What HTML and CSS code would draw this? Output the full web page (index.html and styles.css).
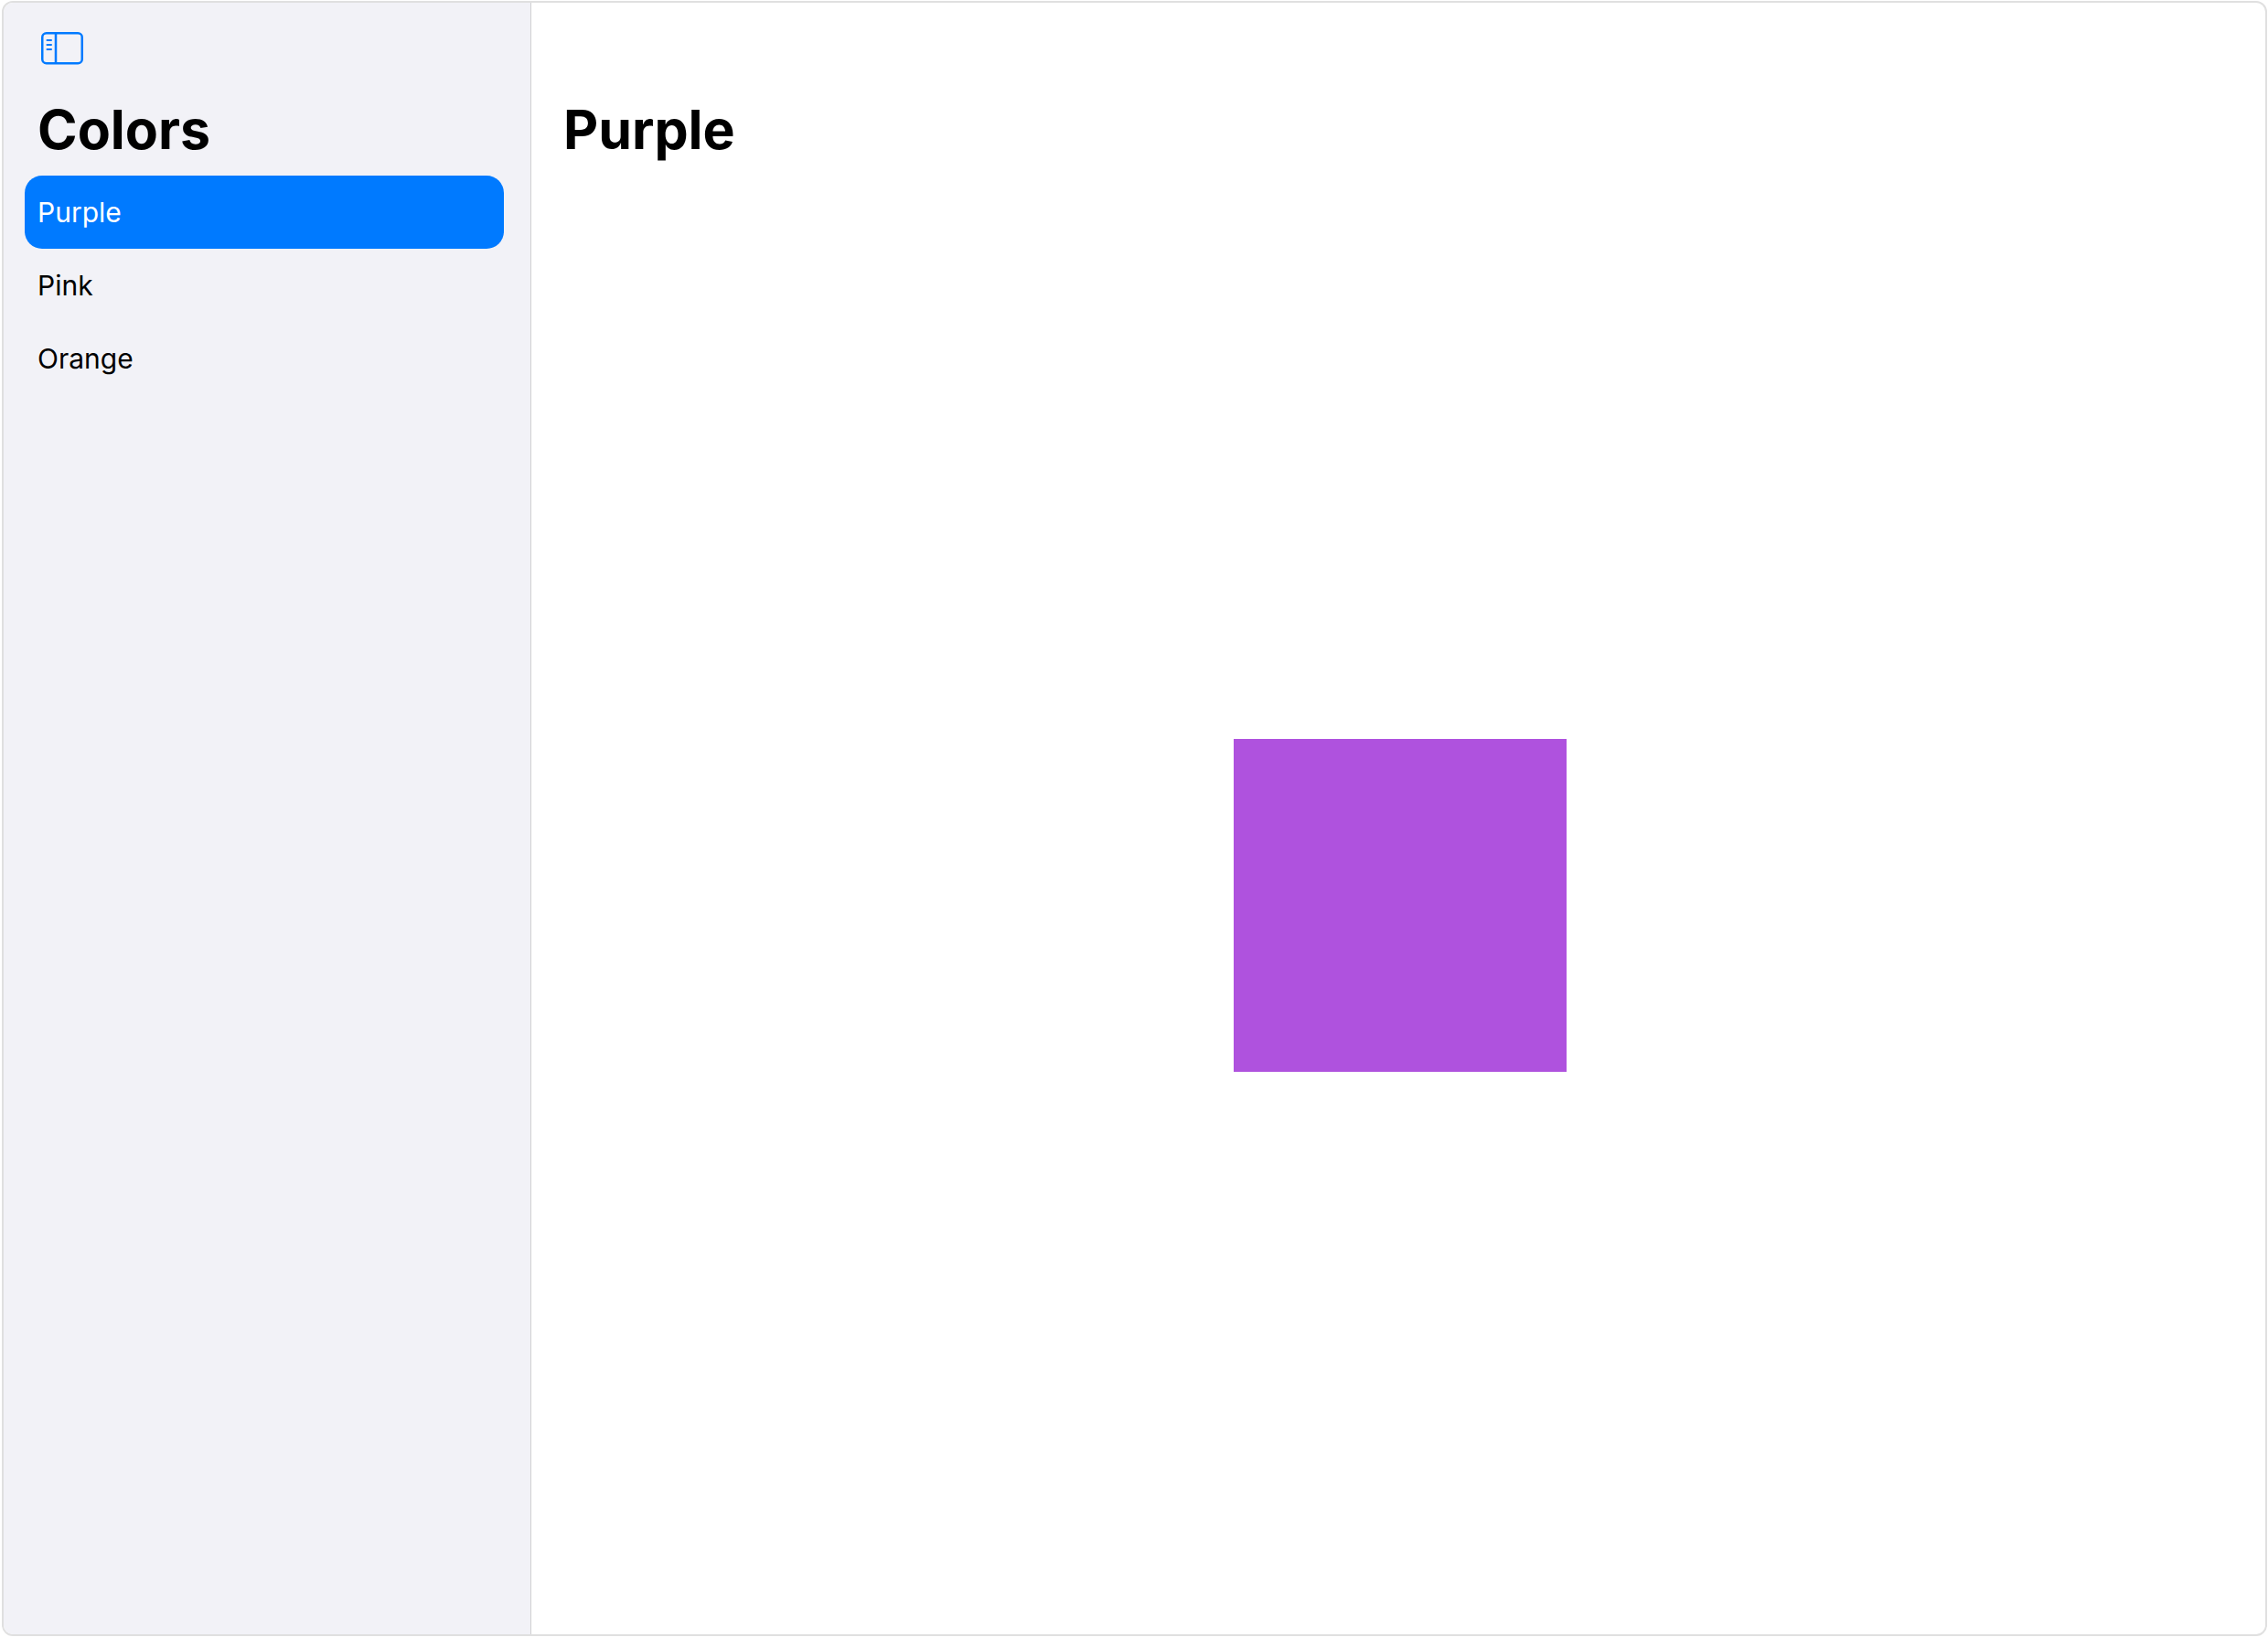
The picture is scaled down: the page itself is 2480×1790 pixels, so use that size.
FILE: index.html
```
<!DOCTYPE html>
<html lang="en">
<head>
    <meta charset="UTF-8">
    <meta name="viewport" content="width=device-width, initial-scale=1.0">
    <title>Colors</title>
    <link rel="stylesheet" href="styles.css">
</head>
<body>
    <div class="window">
        <aside class="sidebar">
            <button type="button" class="sidebar-toggle" aria-label="Toggle sidebar">
                <svg width="46" height="36" viewBox="0 0 46 36" fill="none" stroke="currentColor">
                    <rect x="1.25" y="1.25" width="43.5" height="33" rx="4.5" stroke-width="2.5"/>
                    <path d="M16 1v33" stroke-width="2.5"/>
                    <path d="M6.5 9h4.5M6.5 14h4.5M6.5 19h4.5" stroke-width="2" stroke-linecap="round"/>
                </svg>
            </button>
            <h1>Colors</h1>
            <nav class="color-list">
                <a href="#purple" class="selected" aria-current="page">Purple</a>
                <a href="#pink">Pink</a>
                <a href="#orange">Orange</a>
            </nav>
        </aside>

        <main class="detail">
            <h1>Purple</h1>
            <div class="swatch-area">
                <div class="swatch"></div>
            </div>
        </main>
    </div>
</body>
</html>
```
FILE: styles.css
```
* {
    box-sizing: border-box;
}

body {
    margin: 0;
    padding: 1px 1px 1px 2px;
    min-height: 100vh;
    display: flex;
    background-color: #fff;
    color: #000;
    font-family: Inter, "Liberation Sans", sans-serif;
}

.window {
    flex: 1;
    display: flex;
    border: 2px solid #e0e0e0;
    border-radius: 12px;
    overflow: hidden;
}

.sidebar {
    width: 577px;
    flex-shrink: 0;
    padding: 32px 29px 0 23px;
    background-color: #f2f2f7;
    border-right: 1px solid #d0d0d2;
}

.sidebar-toggle {
    display: block;
    margin: 0 0 0 18px;
    padding: 0;
    border: none;
    background: none;
    color: #007aff;
    cursor: pointer;
}

.sidebar-toggle svg {
    display: block;
}

h1 {
    margin: 0;
    font-size: 59px;
    line-height: 72px;
    font-weight: 700;
}

.sidebar h1 {
    margin: 35px 0 14px;
    padding-left: 14px;
}

.color-list a {
    display: block;
    padding: 20px 14px;
    border-radius: 19px;
    color: #000;
    font-size: 30px;
    line-height: 40px;
    text-decoration: none;
}

.color-list .selected {
    background-color: #007aff;
    color: #fff;
}

/* Detail column */
.detail {
    flex: 1;
    display: flex;
    flex-direction: column;
    padding: 103px 0 0;
}

.detail h1 {
    padding-left: 35px;
}

.swatch-area {
    flex: 1;
    display: flex;
    align-items: center;
    justify-content: center;
    margin-top: 14px;
    padding-left: 4px;
}

.swatch {
    width: 364px;
    height: 364px;
    background-color: #af52de;
}
```
